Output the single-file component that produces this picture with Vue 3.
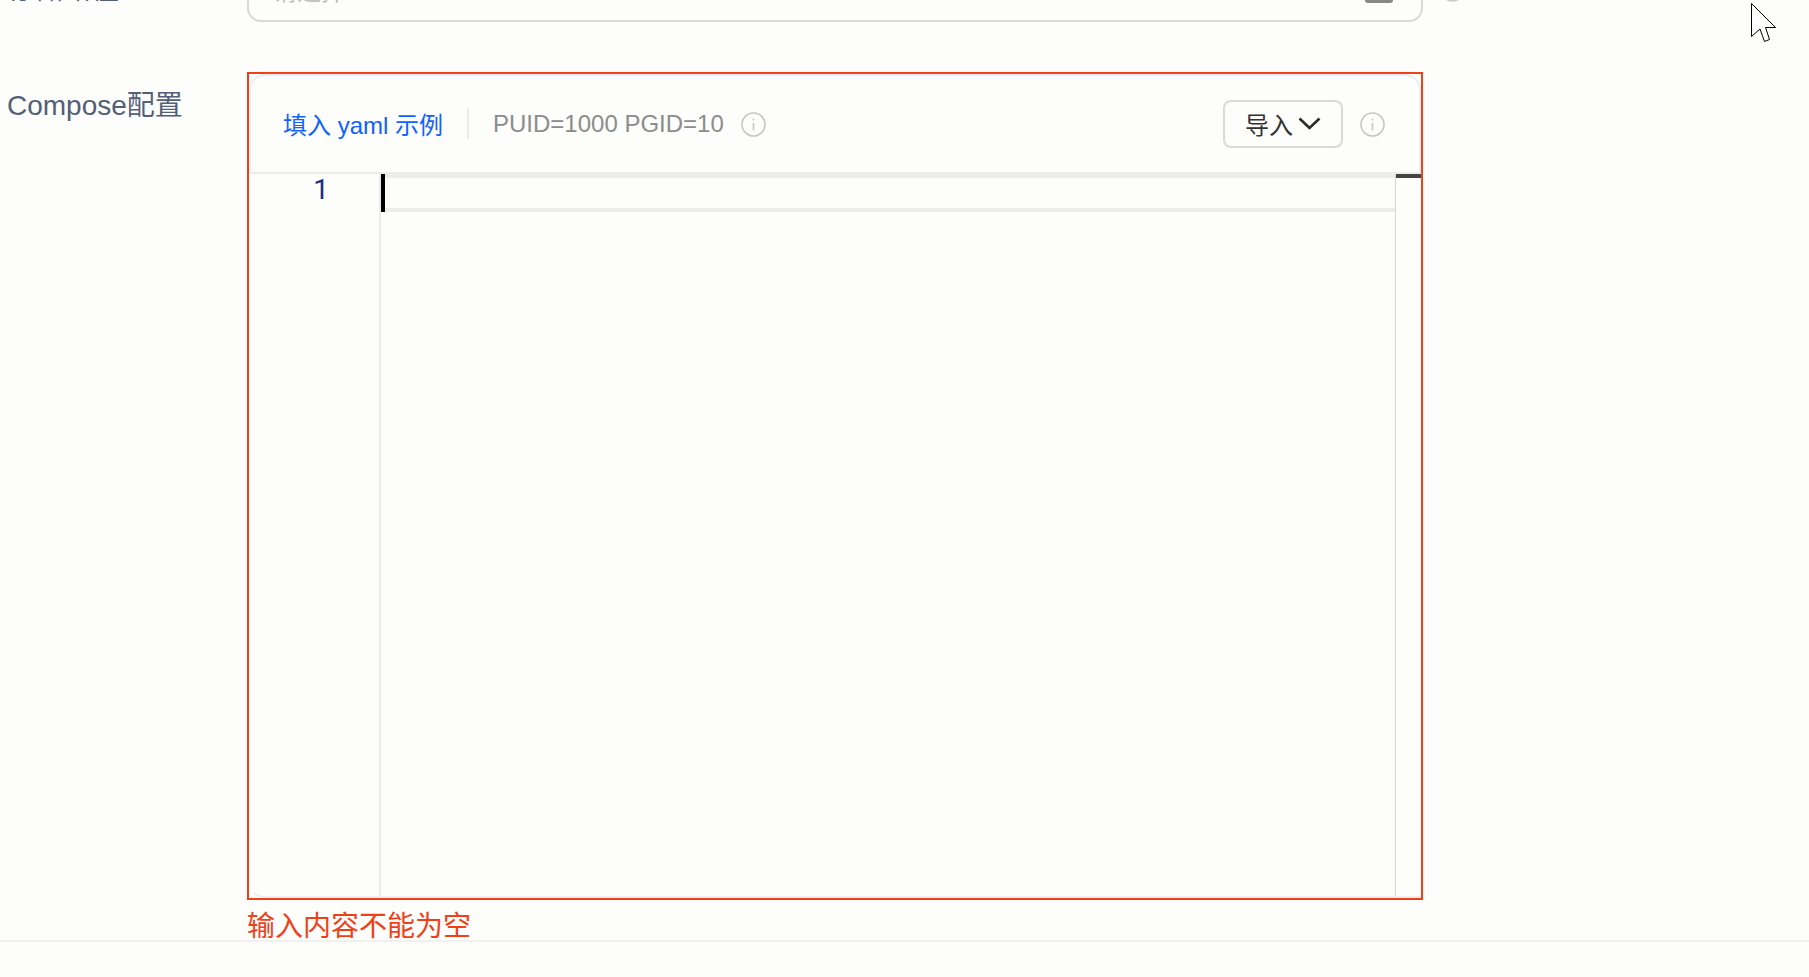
<script setup>
const infoPath = 'M12.5 11v7.5';
</script>

<template>
  <div class="page">
    <main class="form">
      <section class="row row-path">
        <div class="label">存储路径</div>
        <div class="select">
          <span class="placeholder">请选择</span>
          <span class="select-icon"></span>
        </div>
        <svg class="info info-top" viewBox="0 0 25 25" aria-hidden="true">
          <circle cx="12.5" cy="12.5" r="11.5" />
          <path d="M12.5 11v7.5" />
          <circle class="dot" cx="12.5" cy="7.5" r="1" />
        </svg>
      </section>

      <section class="row row-compose">
        <div class="label label-compose">Compose配置</div>
        <div class="control">
          <div class="error-box">
            <div class="card">
              <div class="toolbar">
                <a class="link">填入 yaml 示例</a>
                <span class="divider"></span>
                <span class="hint">PUID=1000 PGID=10</span>
                <svg class="info info-hint" viewBox="0 0 25 25" aria-hidden="true">
                  <circle cx="12.5" cy="12.5" r="11.5" />
                  <path :d="infoPath" />
                  <circle class="dot" cx="12.5" cy="7.5" r="1" />
                </svg>
                <button class="import" type="button">
                  <span>导入</span>
                  <svg class="chevron" viewBox="0 0 23 13" aria-hidden="true">
                    <path d="M1.5 1.5 11.5 11l10-9.5" />
                  </svg>
                </button>
                <svg class="info info-import" viewBox="0 0 25 25" aria-hidden="true">
                  <circle cx="12.5" cy="12.5" r="11.5" />
                  <path :d="infoPath" />
                  <circle class="dot" cx="12.5" cy="7.5" r="1" />
                </svg>
              </div>
              <div class="editor">
                <div class="gutter"><div class="line-number">1</div></div>
                <div class="code">
                  <div class="active-line"><span class="caret"></span></div>
                </div>
                <div class="ruler"><span class="thumb"></span></div>
              </div>
            </div>
          </div>
          <div class="error-text">输入内容不能为空</div>
        </div>
      </section>
    </main>
    <footer class="footer"></footer>

    <svg class="pointer" viewBox="0 0 30 44" aria-hidden="true">
      <path d="M1.5 1.5 25.5 25.5H15.5L19.5 37.5 14.5 39.5 10 27 1.5 34.5Z" />
    </svg>
  </div>
</template>

<style>
html, body { margin: 0; overflow: hidden; background: #fdfdfb; }
</style>

<style scoped>
.page {
  position: relative;
  display: flex;
  flex-direction: column;
  height: 977px;
  overflow: hidden;
  background: #fdfdfb;
  font-family: "Liberation Sans", "Noto Sans CJK SC", sans-serif;
}
.form { height: 940px; flex: none; }
.row { display: flex; align-items: flex-start; }
.label {
  flex: none;
  width: 240px;
  padding-left: 7px;
  font-size: 28px;
  color: #545f78;
}
.row-path { height: 58px; margin-top: -36px; }
.row-path .label { line-height: 56px; margin-top: -2px; }
.select {
  box-sizing: border-box;
  display: flex;
  align-items: flex-end;
  justify-content: space-between;
  width: 1176px;
  height: 58px;
  border: 2px solid #d9d9d9;
  border-radius: 14px;
}
.placeholder {
  margin: 0 0 13px 24px;
  font-size: 24px;
  line-height: 30px;
  color: #bcbcbc;
}
.select-icon {
  width: 28px;
  height: 30px;
  margin: 0 28px 17px 0;
  border-radius: 3px;
  background: #888;
}
.info { display: block; flex: none; width: 25px; height: 25px; }
.info circle, .info path { fill: none; stroke: #c6c6c6; stroke-width: 1.6; }
.info .dot { fill: #c6c6c6; stroke: none; }
.info-top { margin: 13px 0 0 17px; }
.row-compose { margin-top: 50px; }
.label-compose { line-height: 34px; padding-top: 17px; }
.control { width: 1176px; }
.error-box {
  box-sizing: border-box;
  height: 828px;
  border: 2px solid #f04018;
}
.card {
  box-sizing: border-box;
  display: flex;
  flex-direction: column;
  height: 100%;
  border: 2px solid #ededed;
  border-radius: 16px;
}
.toolbar {
  box-sizing: border-box;
  display: flex;
  align-items: center;
  flex: none;
  height: 98px;
  padding: 0 34px 2px 32px;
  border-bottom: 2px solid #ececec;
}
.link { font-size: 24px; color: #0f62fe; }
.divider {
  width: 2px;
  height: 32px;
  margin: 0 24px 0 24px;
  background: #ececec;
}
.hint { margin-top: 2px; font-size: 24px; color: #8c8c8c; }
.info-hint { margin: 2px 0 0 17px; }
.import {
  box-sizing: border-box;
  display: flex;
  align-items: center;
  gap: 5px;
  height: 48px;
  width: 120px;
  margin: 1px 0 0 auto;
  padding: 0 0 0 20px;
  border: 2px solid #d9d9d9;
  border-radius: 8px;
  background: transparent;
  font-family: inherit;
  font-size: 24px;
  color: #333;
}
.chevron { display: block; width: 23px; height: 13px; fill: none; stroke: #2b2b2b; stroke-width: 2.6; }
.info-import { margin: 2px 0 0 17px; }
.editor {
  position: relative;
  display: flex;
  flex: 1;
  min-height: 0;
  margin: 0 -2px -2px;
  border-bottom: 2px solid #eeeeee;
  border-left: 2px solid #fdfdfb;
  border-bottom-left-radius: 16px;
  background: #fdfdfb;
}
.gutter {
  box-sizing: border-box;
  flex: none;
  width: 130px;
  border-right: 2px solid #ececec;
}
.line-number {
  box-sizing: border-box;
  height: 34px;
  padding-right: 50px;
  font-family: Roboto, "Liberation Sans", sans-serif;
  font-size: 28px;
  line-height: 32px;
  text-align: right;
  color: #1a2f80;
}
.code { flex: 1; min-width: 0; }
.active-line {
  box-sizing: border-box;
  height: 38px;
  border-top: 4px solid #ececec;
  border-bottom: 4px solid #ececec;
  overflow: visible;
}
.caret { display: block; width: 4px; height: 38px; margin-top: -4px; background: #000; }
.ruler {
  box-sizing: border-box;
  position: relative;
  flex: none;
  width: 26px;
  border-left: 1px solid #d6d6d6;
}
.thumb { display: block; height: 4px; background: #444; }
.error-text {
  margin-top: 10px;
  font-size: 28px;
  line-height: 34px;
  color: #f04018;
}
.footer { flex: 1; border-top: 2px solid #f0f0ee; }
.pointer {
  position: absolute;
  left: 1750px;
  top: 2px;
  width: 30px;
  height: 44px;
  fill: #fff;
  stroke: #000;
  stroke-width: 1;
}
</style>
